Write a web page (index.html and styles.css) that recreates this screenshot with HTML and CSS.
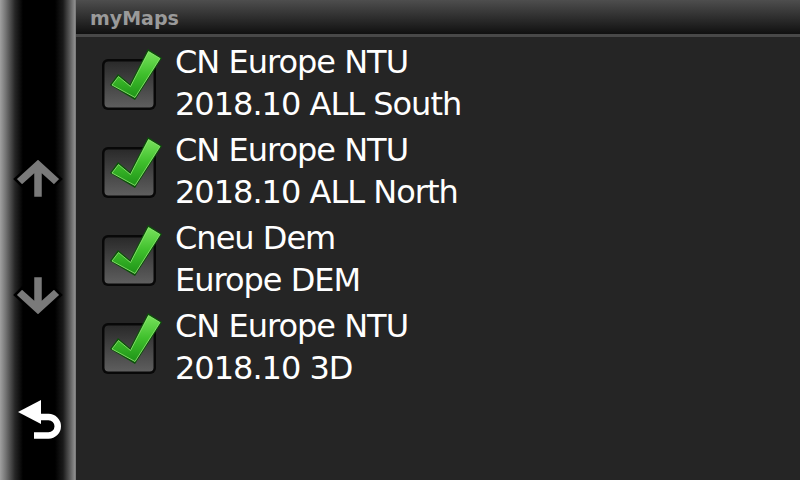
FILE: index.html
```html
<!DOCTYPE html>
<html>
<head>
    <title>myMaps</title>
    <link rel="stylesheet" href="styles.css">
</head>
<body>
    <div class="screen">
        <div class="side">
            <div class="side-btn up">
                <svg width="52" height="44" viewBox="0 0 52 44">
                    <path class="arrow" d="M26 2 L49 23 L42 30 L31 20 L31 42 L21 42 L21 20 L10 30 L3 23 Z"/>
                </svg>
            </div>
            <div class="side-btn down">
                <svg width="52" height="44" viewBox="0 0 52 44">
                    <path class="arrow" d="M26 42 L49 21 L42 14 L31 24 L31 2 L21 2 L21 24 L10 14 L3 21 Z"/>
                </svg>
            </div>
            <div class="side-btn back">
                <svg width="52" height="50" viewBox="0 0 52 50">
                    <polygon class="back-head" points="6,18 29,6 29,30"/>
                    <path class="back-hook" d="M25 23 H36.5 A9.25 9.25 0 0 1 36.5 41.5 H22"/>
                </svg>
            </div>
        </div>
        <div class="main">
            <div class="title">myMaps</div>
            <ul class="list">
                <li class="item">
                    <svg class="check" width="66" height="66" viewBox="0 0 66 66">
                        <use href="#box"/>
                    </svg>
                    <div class="label">CN Europe NTU<br>2018.10 ALL South</div>
                </li>
                <li class="item">
                    <svg class="check" width="66" height="66" viewBox="0 0 66 66">
                        <use href="#box"/>
                    </svg>
                    <div class="label">CN Europe NTU<br>2018.10 ALL North</div>
                </li>
                <li class="item">
                    <svg class="check" width="66" height="66" viewBox="0 0 66 66">
                        <use href="#box"/>
                    </svg>
                    <div class="label">Cneu Dem<br>Europe DEM</div>
                </li>
                <li class="item">
                    <svg class="check" width="66" height="66" viewBox="0 0 66 66">
                        <use href="#box"/>
                    </svg>
                    <div class="label">CN Europe NTU<br>2018.10 3D</div>
                </li>
            </ul>
        </div>
    </div>

    <svg width="0" height="0" class="defs">
        <defs>
            <linearGradient id="boxfill" x1="0" y1="0" x2="0" y2="1">
                <stop offset="0" stop-color="#2a2a2a"/>
                <stop offset="1" stop-color="#5e5e5e"/>
            </linearGradient>
            <linearGradient id="greenfill" x1="0" y1="0" x2="0" y2="1">
                <stop offset="0" stop-color="#78e25c"/>
                <stop offset="0.5" stop-color="#3fbf2c"/>
                <stop offset="1" stop-color="#1f9418"/>
            </linearGradient>
            <g id="box">
                <rect x="3" y="12" width="54" height="51" rx="6" fill="#080808"/>
                <rect x="5.5" y="14.5" width="49" height="46" rx="4" fill="url(#boxfill)"/>
                <polygon points="11,38 19,27 31,37 49,2 63,11 36,53" fill="#0c5209"/>
                <polygon points="13,38 19.5,29.5 31.5,39.5 49.5,4.5 61,11.5 36,50.5" fill="url(#greenfill)" stroke="#9af07c" stroke-width="0.8"/>
            </g>
        </defs>
    </svg>
</body>
</html>
```

FILE: styles.css
```css
body{
    margin: 0;
    padding: 0;
    background: #252525;
    font-family: "DejaVu Sans", sans-serif;
}

.screen{
    display: flex;
    width: 800px;
    height: 480px;
    overflow: hidden;
}

.side{
    width: 76px;
    flex-shrink: 0;
    display: flex;
    flex-direction: column;
    align-items: center;
    background: linear-gradient(to right, #a0a0a0 0px, #7a7a7a 5px, #262626 15px, #000000 23px, #000000 55px, #1a1a1a 63px, #5c5c5c 70px, #909090 75px, #6a6a6a 76px);
}

.side-btn{
    display: flex;
    justify-content: center;
    align-items: center;
    width: 76px;
}
.up{
    height: 44px;
    margin-top: 156px;
}
.down{
    height: 44px;
    margin-top: 74px;
}
.back{
    height: 50px;
    margin-top: 76px;
}

.arrow{
    fill: #7a7a7a;
    stroke: #000000;
    stroke-width: 2.5;
    stroke-linejoin: miter;
}
.back-head{
    fill: #ffffff;
}
.back-hook{
    fill: none;
    stroke: #ffffff;
    stroke-width: 6.5;
}

.main{
    flex: 1;
    display: flex;
    flex-direction: column;
}

.title{
    height: 37px;
    box-sizing: border-box;
    padding-left: 14px;
    padding-top: 7px;
    font-size: 19px;
    font-weight: bold;
    color: #9a9a9a;
    background: linear-gradient(to bottom, #4e4e4e 0%, #323232 45%, #101010 100%);
    border-bottom: 3px solid #484848;
}

.list{
    list-style: none;
    margin: 0;
    padding: 0;
}

.item{
    display: flex;
    align-items: flex-start;
    height: 88px;
}

.check{
    margin-left: 23px;
    margin-top: 10px;
    flex-shrink: 0;
}

.label{
    margin-left: 10px;
    margin-top: 4px;
    color: #ffffff;
    font-size: 32px;
    letter-spacing: -1px;
    line-height: 42px;
    white-space: nowrap;
}

.defs{
    position: absolute;
}
```
